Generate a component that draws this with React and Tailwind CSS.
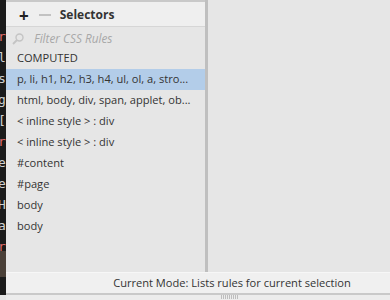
import React from "react";

const rows = [
    "p, li, h1, h2, h3, h4, ul, ol, a, stro...",
    "html, body, div, span, applet, ob...",
    "< inline style > : div",
    "< inline style > : div",
    "#content",
    "#page",
    "body",
    "body",
];

// bits of the code editor peeking out on the left
const codeBits = [
    ["r", "text-[#e06c6c]"],
    ["l", "text-[#d0d0d0]"],
    ["s", "text-[#d0d0d0]"],
    ["g", "text-[#d0d0d0]"],
    ["[", "text-[#d0d0d0]"],
    ["r", "text-[#e06c6c]"],
    ["e", "text-[#d0d0d0]"],
    ["e", "text-[#d0d0d0]"],
    ["H", "text-[#d0d0d0]"],
    ["a", "text-[#d0d0d0]"],
    ["r", "text-[#e06c6c]"],
];

const App = () => {
    return (
        <div className="w-[390px] h-[300px] flex overflow-hidden bg-[#e6e6e6] font-['Open_Sans',sans-serif] text-[11.1px] text-[#333]">
            {/* editor strip */}
            <div className="w-[6px] h-[295px] bg-[#1b1b1b] overflow-hidden flex flex-col pt-[26px] leading-[21px] text-[13px] font-['DejaVu_Sans_Mono',monospace]">
                {codeBits.map(([c, cls], i) => (
                    <span key={i} className={`-ml-[2px] ${cls}`}>{c}</span>
                ))}
                <div className="h-[26px] bg-[#4a4038] -mt-[6px]"></div>
            </div>

            <div className="flex-1 flex flex-col">
                <div className="flex h-[272px]">
                    {/* selectors panel */}
                    <div className="w-[199px] flex flex-col border-t-2 border-[#c9c9c9]">
                        <div className="h-[25px] flex items-center pt-[2px] bg-[#efefef] border-b border-[#d6d6d6]">
                            <span className="ml-[13px] text-[17px] leading-none font-bold text-[#222]">+</span>
                            <span className="ml-[10px] w-[12px] h-[2px] bg-[#c2c2c2]"></span>
                            <span className="ml-[9px] font-bold text-[12px] text-[#333]">Selectors</span>
                        </div>
                        <div className="h-[21px] flex items-center pt-[2px]">
                            <svg width="12" height="12" viewBox="0 0 12 12" className="ml-[6px]">
                                <circle cx="7.5" cy="4.5" r="3.5" fill="none" stroke="#c4c4c4" strokeWidth="1.4" />
                                <line x1="5" y1="7" x2="1" y2="11" stroke="#c4c4c4" strokeWidth="1.8" />
                            </svg>
                            <span className="ml-[10px] italic text-[11.8px] text-[#a8a8a8]">Filter CSS Rules</span>
                        </div>
                        <div className="h-[21px] flex items-center pl-[11px]">COMPUTED</div>
                        {rows.map((r, i) => (
                            <div
                                key={i}
                                className={`h-[21px] flex items-center pl-[11px] whitespace-nowrap ${i === 0 ? "bg-[#b3cde9]" : ""}`}
                            >
                                {r}
                            </div>
                        ))}
                    </div>
                    <div className="w-[3px] bg-[#bfbfbf]"></div>
                    <div className="flex-1"></div>
                </div>

                {/* status bar */}
                <div className="h-[21px] bg-[#f0f0f0] border-t border-[#f7f7f7] flex items-center justify-center pl-[68px]">
                    Current Mode: Lists rules for current selection
                </div>
                <div className="h-[2px] bg-[#c9c9c9]"></div>
                <div className="flex-1 bg-[#ececec] flex justify-center pl-[64px]">
                    <div className="w-[18px] h-[4px] bg-[repeating-linear-gradient(90deg,#bdbdbd_0_1px,transparent_1px_2px)]"></div>
                </div>
            </div>
        </div>
    );
};

export default App;
